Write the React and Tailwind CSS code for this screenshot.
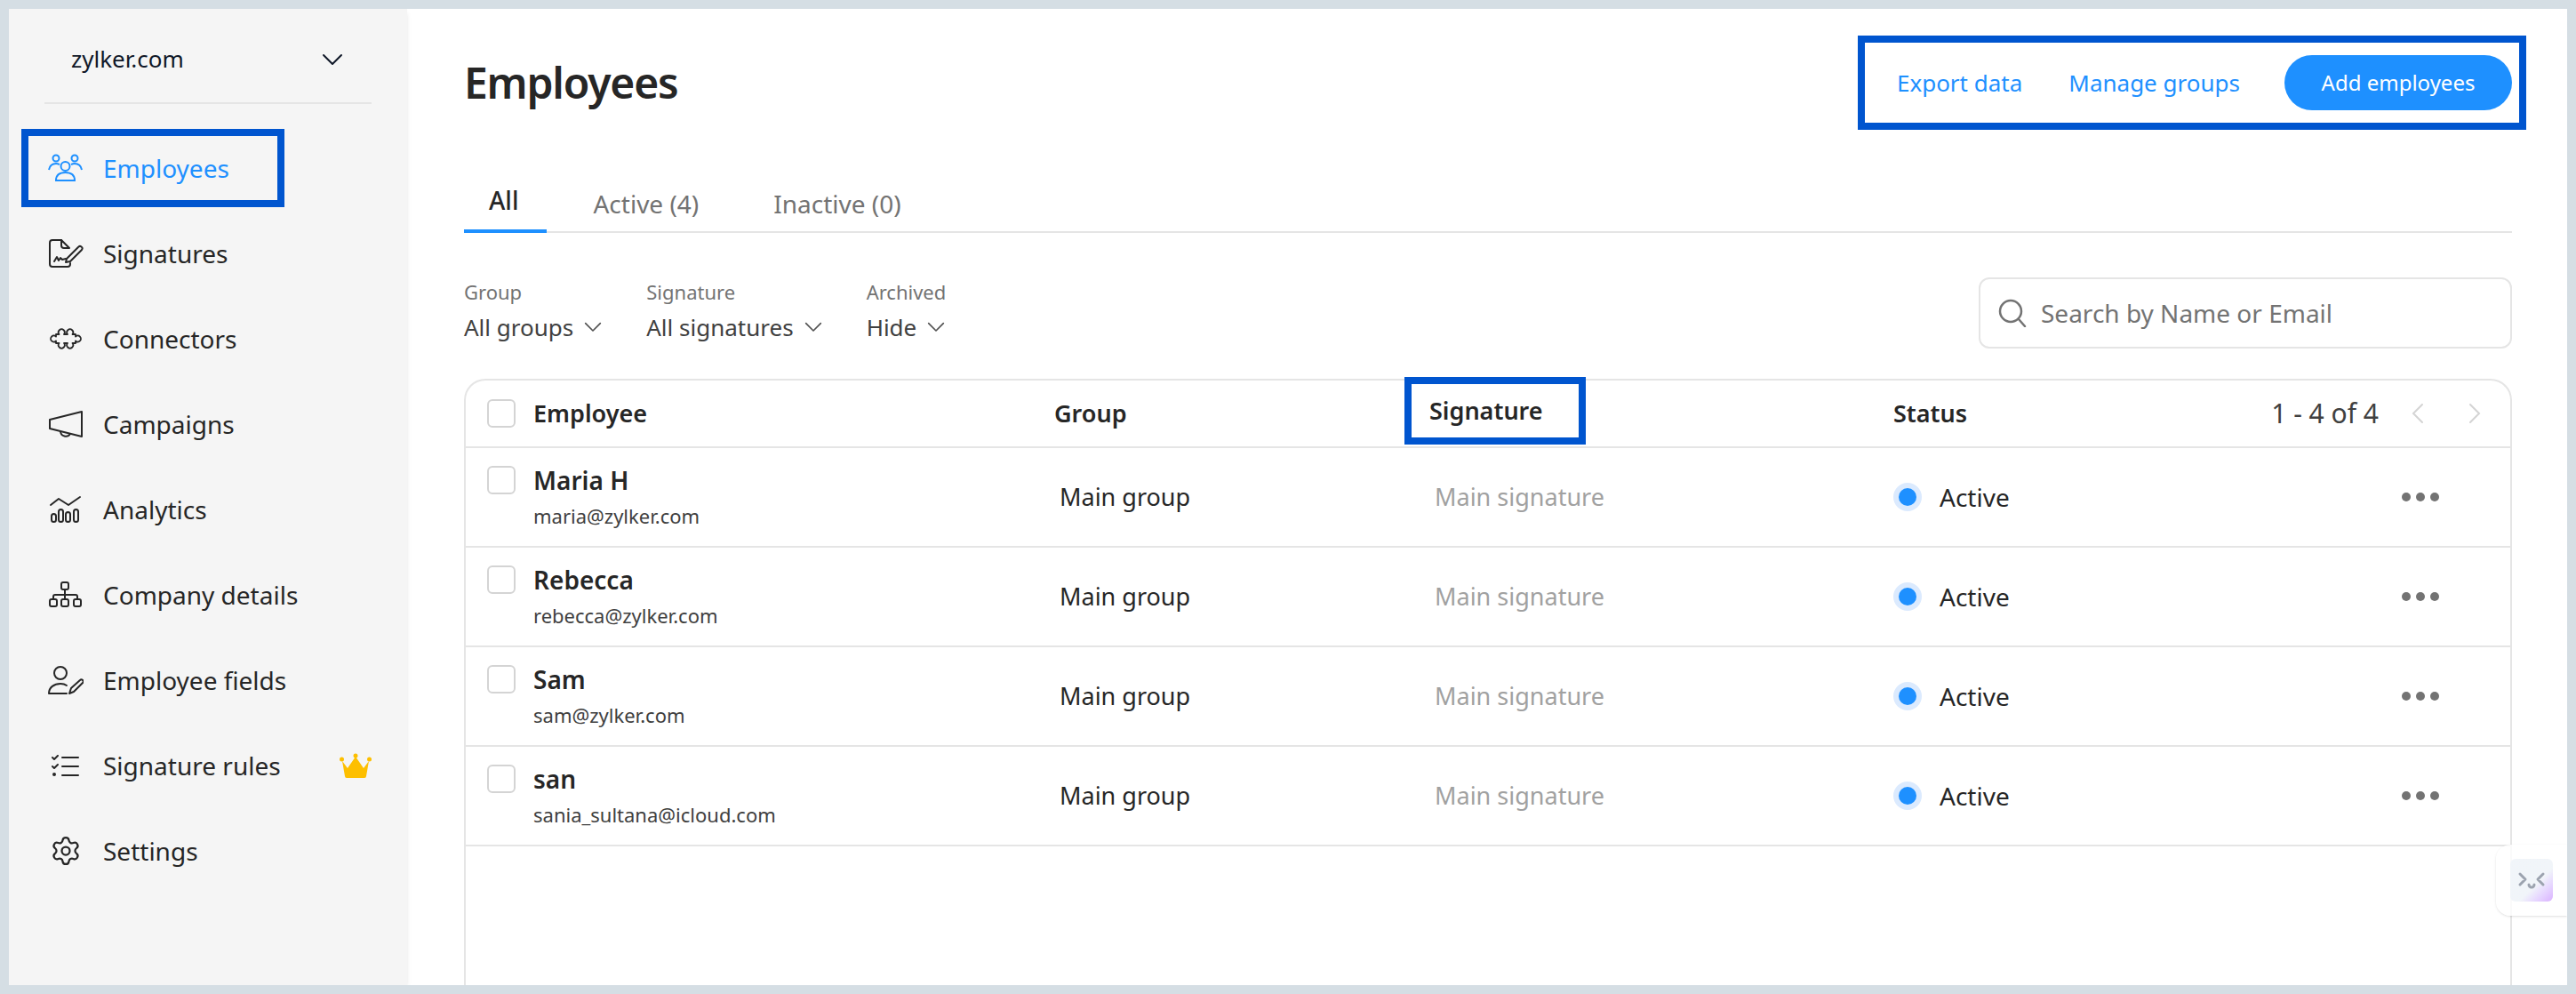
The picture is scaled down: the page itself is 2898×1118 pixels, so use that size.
import React from "react";
import { Settings } from "lucide-react";

const Chevron = ({ className }) => (
  <svg className={className} viewBox="0 0 24 14" fill="none" stroke="currentColor" strokeLinecap="round" strokeLinejoin="round" strokeWidth="2">
    <path d="M2 2l10 10L22 2" />
  </svg>
);

const icons = {
  employees: (
    <svg className="h-8 w-10" viewBox="0 0 40 32" fill="none" stroke="currentColor" strokeWidth="2">
      <circle cx="19.5" cy="14" r="5" />
      <circle cx="9" cy="5" r="3.5" />
      <circle cx="30" cy="5" r="3.5" />
      <path d="M9 30c0-7 5-9 10.500-9S30 23 30 30z" />
      <path d="M1 18c1-5 4-7 8-7 2 0 3 .5 4 1M38 18c-1-5-4-7-8-7-2 0-3 .5-4 1" />
    </svg>
  ),
  signatures: (
    <svg className="h-8 w-10" viewBox="0 0 40 32" fill="none" stroke="currentColor" strokeWidth="2" strokeLinecap="round" strokeLinejoin="round">
      <path d="M15 1H5a3 3 0 0 0-3 3v24a3 3 0 0 0 3 3h17a3 3 0 0 0 3-3v-1" />
      <path d="M15 1v6a3 3 0 0 0 3 3h6M15 1l9 9" />
      <path d="M7 25l3-5 2 4 2-3 2 2 4-1" />
      <path d="M21 22l13-13a2.500 2.500 0 0 1 4 3L25 25l-5 1z" />
    </svg>
  ),
  connectors: (
    <svg className="h-6 w-10" viewBox="2 0 36 24" fill="none" stroke="currentColor" strokeWidth="1.8" strokeLinejoin="round">
      <path d="M9 7h3.500a3.500 3.500 0 1 1 5.500 0h4a3.500 3.500 0 1 1 5.500 0H31v2.500a3.500 3.500 0 1 1 0 5V17h-3.500a3.500 3.500 0 1 1-5.500 0h-4a3.500 3.500 0 1 1-5.500 0H9v-2.500a3.500 3.500 0 1 1 0-5z" />
    </svg>
  ),
  campaigns: (
    <svg className="h-8 w-10" viewBox="0 0 40 32" fill="none" stroke="currentColor" strokeWidth="2" strokeLinejoin="round">
      <path d="M2 11L38 2v28L2 21z" />
      <path d="M14 24a6 6 0 0 0 11 3" />
    </svg>
  ),
  analytics: (
    <svg className="h-8 w-10" viewBox="0 0 40 32" fill="none" stroke="currentColor" strokeWidth="2" strokeLinecap="round" strokeLinejoin="round">
      <path d="M3 11l9-7 11 7 13-9" />
      <rect x="4" y="21" width="5" height="9" rx="2.500" />
      <rect x="12" y="16" width="5" height="14" rx="2.500" />
      <rect x="20" y="19" width="5" height="11" rx="2.500" />
      <rect x="29" y="16" width="5" height="14" rx="2.500" />
    </svg>
  ),
  company: (
    <svg className="h-8 w-10" viewBox="0 0 40 32" fill="none" stroke="currentColor" strokeWidth="2">
      <rect x="15" y="2" width="8" height="8" rx="2" />
      <rect x="2" y="21" width="8" height="8" rx="2" />
      <rect x="15" y="21" width="8" height="8" rx="2" />
      <rect x="29" y="21" width="8" height="8" rx="2" />
      <path d="M19 10v11M6 21v-3a2 2 0 0 1 2-2h23a2 2 0 0 1 2 2v3" />
    </svg>
  ),
  fields: (
    <svg className="h-8 w-10" viewBox="0 0 40 32" fill="none" stroke="currentColor" strokeWidth="2" strokeLinecap="round" strokeLinejoin="round">
      <circle cx="14" cy="8" r="7" />
      <path d="M1 31c0-7 6-11 13-11 3 0 5 .5 7 2M1 31h20" />
      <path d="M24 31l2-6 10-9a2 2 0 0 1 3 3l-10 10z" />
    </svg>
  ),
  rules: (
    <svg className="h-6 w-10" viewBox="0 0 40 24" fill="none" stroke="currentColor" strokeWidth="2" strokeLinecap="round" strokeLinejoin="round">
      <path d="M16 3h18M16 13h18M16 23h18" />
      <path d="M5 3l2 2 4-4M5 13l2 2 4-4" />
      <circle cx="7" cy="22" r="1" />
    </svg>
  ),
};

const nav = [
  { name: "Employees", icon: icons.employees, active: true },
  { name: "Signatures", icon: icons.signatures },
  { name: "Connectors", icon: icons.connectors },
  { name: "Campaigns", icon: icons.campaigns },
  { name: "Analytics", icon: icons.analytics },
  { name: "Company details", icon: icons.company },
  { name: "Employee fields", icon: icons.fields },
  { name: "Signature rules", icon: icons.rules, crown: true },
  { name: "Settings", icon: <Settings size={36} strokeWidth={1.5} /> },
];

const employees = [
  { name: "Maria H", email: "maria@zylker.com" },
  { name: "Rebecca", email: "rebecca@zylker.com" },
  { name: "Sam", email: "sam@zylker.com" },
  { name: "san", email: "sania_sultana@icloud.com" },
];

const filters = [
  { label: "Group", value: "All groups" },
  { label: "Signature", value: "All signatures" },
  { label: "Archived", value: "Hide" },
];

const Checkbox = () => (
  <span className="h-8 w-8 shrink-0 rounded-md border-2 border-neutral-300" />
);

const Sidebar = () => (
  <aside className="flex w-112 shrink-0 flex-col bg-neutral-100 shadow-md">
    <div className="mx-10 flex h-[107px] items-center justify-between border-b-2 border-neutral-200 pl-7.5 pr-8 pt-2">
      <span className="text-[26px] text-gray-900">zylker.com</span>
      <Chevron className="w-6 text-gray-900" />
    </div>
    <nav className="flex flex-col pt-6">
      {nav.map((item) => (
        <div key={item.name} className="flex h-24 items-center">
          <div
            className={
              item.active
                ? "ml-3.5 flex h-22 w-74 items-center gap-5.5 border-8 border-[#0055cf] pl-5.5 text-[#1e90ff]"
                : "ml-11 flex w-full items-center gap-5.5 pr-10 text-neutral-800"
            }
          >
            <span className="flex w-10 justify-center">{item.icon}</span>
            <span className="flex-1 text-[28px]">{item.name}</span>
            {item.crown && (
              <svg className="h-7 w-9" viewBox="0 0 36 28" fill="#fdbf00">
                <path d="M3 9l6 8 9-13 9 13 6-8-3 17a2 2 0 0 1-2 2H8a2 2 0 0 1-2-2z" />
                <circle cx="2.500" cy="7" r="2.500" />
                <circle cx="18" cy="3" r="2.500" />
                <circle cx="33.500" cy="7" r="2.500" />
              </svg>
            )}
          </div>
        </div>
      ))}
    </nav>
  </aside>
);

const Filter = ({ label, value }) => (
  <div className="flex flex-col gap-2">
    <span className="text-[22px] leading-8 text-neutral-500">{label}</span>
    <span className="flex items-center gap-3 text-[26px] leading-8 text-neutral-700">
      {value}
      <Chevron className="w-5 text-neutral-600" />
    </span>
  </div>
);

const Row = ({ name, email }) => (
  <div className="grid h-28 grid-cols-[638px_422px_522px_1fr] items-center border-b-2 border-neutral-200 px-6">
    <div className="flex gap-5 self-start pt-5">
      <Checkbox />
      <div className="flex flex-col gap-3">
        <span className="mt-0.5 text-[28px] leading-7 font-semibold text-neutral-800">{name}</span>
        <span className="text-[22px] leading-7 text-neutral-700">{email}</span>
      </div>
    </div>
    <span className="pl-1.5 text-[27px] text-neutral-800">Main group</span>
    <span className="pl-1.5 text-[27px] text-neutral-400">Main signature</span>
    <div className="flex items-center justify-between pr-14">
      <div className="flex items-center gap-5">
        <span className="flex h-8 w-8 items-center justify-center rounded-full bg-blue-100">
          <span className="h-5 w-5 rounded-full bg-[#1e90ff]" />
        </span>
        <span className="text-[28px] text-neutral-800">Active</span>
      </div>
      <div className="flex gap-1.5">
        <span className="h-2.5 w-2.5 rounded-full bg-neutral-500" />
        <span className="h-2.5 w-2.5 rounded-full bg-neutral-500" />
        <span className="h-2.5 w-2.5 rounded-full bg-neutral-500" />
      </div>
    </div>
  </div>
);

const App = () => {
  return (
    <div className="flex h-screen bg-[#d5dee4] p-2.5 font-['Noto_Sans',sans-serif]">
      <div className="relative flex flex-1 overflow-hidden bg-white">
        <Sidebar />
        <main className="flex min-w-0 flex-1 flex-col pl-16 pr-15.5">
          <div className="flex items-center justify-between pt-7.5">
            <h1 className="text-5xl font-semibold tracking-tight text-neutral-800">Employees</h1>
            <div className="-mr-4 flex items-center gap-13 border-8 border-[#0055cf] py-3.5 pl-9 pr-2 text-[26px] text-[#1e90ff]">
              <span>Export data</span>
              <span>Manage groups</span>
              <span className="-ml-0.5 flex h-15.5 w-64 items-center justify-center rounded-full bg-[#1e90ff] text-2xl text-white">
                Add employees
              </span>
            </div>
          </div>

          <div className="mt-14.5 flex items-end gap-6 border-b-2 border-neutral-200 text-[28px]">
            <span className="-mb-0.5 border-b-4 border-[#1e90ff] pb-3 pl-7 pr-8 font-medium text-neutral-800">All</span>
            <span className="px-7 pb-2.5 text-neutral-500">Active (4)</span>
            <span className="ml-1 px-7 pb-2.5 text-neutral-500">Inactive (0)</span>
          </div>

          <div className="mt-12.5 flex items-start justify-between">
            <div className="flex gap-12.5">
              {filters.map((f) => (
                <Filter key={f.label} label={f.label} value={f.value} />
              ))}
            </div>
            <div className="flex h-20 w-150 items-center gap-4 rounded-xl border-2 border-neutral-200 px-5 text-[28px] text-neutral-500">
              <svg className="h-8 w-8" viewBox="0 0 32 32" fill="none" stroke="currentColor" strokeWidth="2.500" strokeLinecap="round">
                <circle cx="14" cy="14" r="12" />
                <path d="M23 23l7 8" />
              </svg>
              Search by Name or Email
            </div>
          </div>

          <div className="mt-8.5 flex-1 rounded-t-3xl border-2 border-b-0 border-neutral-200">
            <div className="grid h-19 grid-cols-[638px_422px_522px_1fr] items-center border-b-2 border-neutral-200 px-6 text-[27px] font-semibold text-neutral-800">
              <div className="flex items-center gap-5">
                <Checkbox />
                Employee
              </div>
              <span>Group</span>
              <span className="-ml-7 -mt-1 flex h-19 w-51 items-center self-start border-8 border-[#0055cf] px-5">
                Signature
              </span>
              <div className="flex items-center justify-between pr-2">
                <span>Status</span>
                <div className="flex items-center gap-9 font-normal text-neutral-700">
                  <span className="text-3xl">1 - 4 of 4</span>
                  <div className="flex gap-12 text-neutral-300">
                    <svg className="h-6 w-4" viewBox="0 0 16 24" fill="none" stroke="currentColor" strokeWidth="2" strokeLinecap="round"><path d="M13 2L3 12l10 10" /></svg>
                    <svg className="h-6 w-4" viewBox="0 0 16 24" fill="none" stroke="currentColor" strokeWidth="2" strokeLinecap="round"><path d="M3 2l10 10L3 22" /></svg>
                  </div>
                </div>
              </div>
            </div>
            {employees.map((e) => (
              <Row key={e.email} name={e.name} email={e.email} />
            ))}
          </div>
        </main>

        <div className="absolute right-0 top-235 flex h-20 w-20 items-center rounded-l-2xl bg-white/80 pl-4 shadow-sm">
          <div className="flex h-12 w-12 items-center justify-center rounded-md bg-linear-to-br from-slate-100 from-60% to-purple-300">
            <svg className="h-5 w-8" viewBox="0 0 32 20" fill="none" stroke="#9ca3af" strokeWidth="3" strokeLinejoin="round" strokeLinecap="round">
              <path d="M3 3l6 6-6 6M29 3l-6 6 6 6M13 15a3 3 0 0 0 6 0" />
            </svg>
          </div>
        </div>
      </div>
    </div>
  );
};

export default App;
